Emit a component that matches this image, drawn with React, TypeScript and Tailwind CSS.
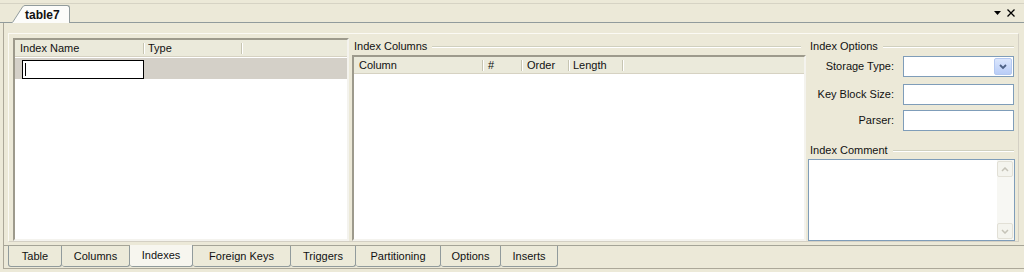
import React from "react";

function Divider() {
  return <div className="w-[2px] h-[11px] self-center border-l border-l-[#c7c5b2] border-r border-r-white shrink-0" />;
}

function HCell({ w, pl, children }: { w: string; pl: string; children?: React.ReactNode }) {
  return <div className={`${w} ${pl} shrink-0 flex items-center whitespace-nowrap`}>{children}</div>;
}

function GroupLabel({ text, pr }: { text: string; pr: string }) {
  return (
    <div className={`h-[17px] flex items-center pl-[2px] ${pr}`}>
      <span className="pr-[5px] leading-none">{text}</span>
      <div className="flex-1 h-[2px] border-t border-t-[#d0d0bf] border-b border-b-white" />
    </div>
  );
}

function FieldRow({ label, mt, children }: { label: string; mt: string; children: React.ReactNode }) {
  return (
    <div className={`flex items-center ${mt} h-[21px]`}>
      <div className="w-[86px] text-right leading-none">{label}</div>
      <div className="ml-[9px] w-[111px] h-[21px] border border-[#7f9db9] bg-white flex items-center justify-end pr-[1px]">
        {children}
      </div>
    </div>
  );
}

function Tab({ w, label, selected, first }: { w: string; label: string; selected?: boolean; first?: boolean }) {
  return (
    <div
      className={`${w} h-[21px] flex items-center justify-center border-b border-r border-[#919b9c] rounded-b-[3px] ${first ? "border-l" : ""} ${
        selected ? "bg-[#f7f6ef] -mt-px h-[22px]" : "bg-[#ecead9]"
      }`}
    >
      <span className="leading-none">{label}</span>
    </div>
  );
}

export default function App() {
  return (
    <div className="w-[1024px] h-[272px] bg-[#ece9d8] flex flex-col overflow-hidden text-[11px] text-[#111] font-['Liberation_Sans',Arial,sans-serif]">
      {/* top bar */}
      <div className="h-[23px] pt-[3px] shrink-0">
        <div className="h-[20px] border-t border-t-[#d6d3c4] border-b border-b-[#919b9c] flex items-end pl-[12px] pr-[9px]">
          <div className="flex items-end h-[18px] -mb-px">
            <svg width="13" height="18" viewBox="0 0 13 18" className="block">
              <path d="M0 18 L10.5 2 Q11.5 0.5 13 0.5 L13 18 Z" fill="#fcfcfa" />
              <path d="M0.5 17.5 L10.5 2 Q11.5 0.5 13 0.5" fill="none" stroke="#919b9c" strokeWidth="1" />
            </svg>
            <div className="h-[18px] bg-[#fcfcfa] border-t border-r border-[#919b9c] rounded-tr-[3px] pr-[9px] flex items-center">
              <span className="font-bold text-[12px] leading-none">table7</span>
            </div>
          </div>
          <div className="ml-auto self-center flex items-center gap-[6px]">
            <svg width="7" height="4" viewBox="0 0 7 4" className="block">
              <path d="M0 0 H7 L3.5 4 Z" fill="#000" />
            </svg>
            <svg width="8" height="8" viewBox="0 0 8 8" className="block">
              <path d="M0.5 0.5 L7.5 7.5 M7.5 0.5 L0.5 7.5" stroke="#000" strokeWidth="1.3" />
            </svg>
          </div>
        </div>
      </div>

      {/* content */}
      <div className="ml-[3px] h-[246px] border-l border-b border-[#aca899] flex flex-col shrink-0">
        {/* frame */}
        <div className="mt-[10px] ml-[4px] w-[1011px] h-[209px] border border-t-[#fbfaf4] border-l-[#fbfaf4] border-r-[#d4d0c4] border-b-[#d4d0c4] pt-[4px] pl-[4px] flex">
          {/* left list */}
          <div className="w-[336px] h-[203px] border-2 border-t-[#9d9a8c] border-l-[#9d9a8c] border-r-[#f4f3ee] border-b-[#f4f3ee] bg-white flex flex-col shrink-0">
            <div className="h-[17px] bg-[#ebeadb] border-b border-[#d6d2c2] flex shrink-0">
              <HCell w="w-[128px]" pl="pl-[5px]">Index Name</HCell>
              <Divider />
              <HCell w="w-[96px]" pl="pl-[3px]">Type</HCell>
              <Divider />
            </div>
            <div className="h-[21px] mt-px bg-[#d4d0c8] shrink-0 flex items-start">
              <div className="ml-[7px] mt-[2px] w-[122px] h-[19px] border border-black bg-white flex items-center pl-[2px]">
                <div className="w-px h-[13px] bg-black" />
              </div>
            </div>
          </div>

          {/* middle */}
          <div className="ml-[3px] w-[454px] h-[203px] flex flex-col shrink-0">
            <GroupLabel text="Index Columns" pr="pr-[5px]" />
            <div className="h-[186px] border-2 border-t-[#9d9a8c] border-l-[#9d9a8c] border-r-[#f4f3ee] border-b-[#f4f3ee] bg-white flex flex-col">
              <div className="h-[17px] bg-[#ebeadb] border-b border-[#d6d2c2] flex shrink-0">
                <HCell w="w-[128px]" pl="pl-[5px]">Column</HCell>
                <Divider />
                <HCell w="w-[37px]" pl="pl-[4px]">#</HCell>
                <Divider />
                <HCell w="w-[45px]" pl="pl-[4px]">Order</HCell>
                <Divider />
                <HCell w="w-[52px]" pl="pl-[3px]">Length</HCell>
                <Divider />
              </div>
            </div>
          </div>

          {/* right */}
          <div className="ml-[2px] w-[209px] h-[203px] flex flex-col shrink-0">
            <GroupLabel text="Index Options" pr="pr-[3px]" />
            <FieldRow label="Storage Type:" mt="mt-[1px]">
              <div className="w-[18px] h-[17px] rounded-[2px] border border-[#b4c8f0] bg-gradient-to-b from-[#dbe6fc] to-[#b9cdf7] flex items-center justify-center">
                <svg width="8" height="6" viewBox="0 0 8 6" className="block">
                  <path d="M1 1 L4 4 L7 1" fill="none" stroke="#4d6185" strokeWidth="1.8" />
                </svg>
              </div>
            </FieldRow>
            <FieldRow label="Key Block Size:" mt="mt-[7px]">
              <span />
            </FieldRow>
            <FieldRow label="Parser:" mt="mt-[5px]">
              <span />
            </FieldRow>
            <div className="mt-[11px]">
              <GroupLabel text="Index Comment" pr="pr-[3px]" />
            </div>
            <div className="w-[207px] h-[82px] border border-[#7f9db9] bg-white flex justify-end">
              <div className="w-[17px] h-full bg-[#f7f7f3] flex flex-col justify-between py-[1px] pr-[1px]">
                <div className="h-[16px] rounded-[2px] border border-[#e2e0d6] bg-[#f4f4ee] flex items-center justify-center">
                  <svg width="8" height="5" viewBox="0 0 8 5" className="block">
                    <path d="M1 4 L4 1 L7 4" fill="none" stroke="#c5c3b8" strokeWidth="1.5" />
                  </svg>
                </div>
                <div className="h-[16px] rounded-[2px] border border-[#e2e0d6] bg-[#f4f4ee] flex items-center justify-center">
                  <svg width="8" height="5" viewBox="0 0 8 5" className="block">
                    <path d="M1 1 L4 4 L7 1" fill="none" stroke="#c5c3b8" strokeWidth="1.5" />
                  </svg>
                </div>
              </div>
            </div>
          </div>
        </div>

        {/* bottom tabs */}
        <div className="mt-[3px] border-t border-[#a5a497] pl-[4px] flex items-start">
          <Tab w="w-[54px]" label="Table" first />
          <Tab w="w-[68px]" label="Columns" />
          <Tab w="w-[63px]" label="Indexes" selected />
          <Tab w="w-[98px]" label="Foreign Keys" />
          <Tab w="w-[65px]" label="Triggers" />
          <Tab w="w-[85px]" label="Partitioning" />
          <Tab w="w-[60px]" label="Options" />
          <Tab w="w-[57px]" label="Inserts" />
        </div>
      </div>
    </div>
  );
}
